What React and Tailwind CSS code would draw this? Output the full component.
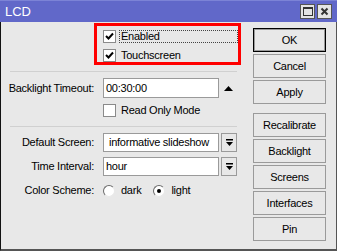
import React from "react";

const font = { fontFamily: '"Liberation Sans", Arial, sans-serif' };

function Check({ checked }) {
  return (
    <div className="w-[13px] h-[13px] shrink-0 bg-white border border-[#8a8a8a] flex items-center justify-center">
      {checked && (
        <svg width="9" height="9" viewBox="0 0 9 9">
          <path d="M1 4 L3.5 6.5 L8 1.5" stroke="#000" strokeWidth="2" fill="none" />
        </svg>
      )}
    </div>
  );
}

function Radio({ checked }) {
  return (
    <div className="w-[12px] h-[12px] shrink-0 rounded-full bg-white border border-t-[#6a6a6a] border-l-[#6a6a6a] border-r-[#e8e8e8] border-b-[#e8e8e8] flex items-center justify-center">
      {checked && <div className="w-[4px] h-[4px] rounded-full bg-black" />}
    </div>
  );
}

function DropBtn() {
  return (
    <div className="w-[16px] h-full ml-[2px] bg-[#e8e8e8] border border-[#9a9a9a] flex items-center justify-center">
      <svg width="9" height="9" viewBox="0 0 9 9">
        <rect x="1" y="1" width="7" height="1.5" fill="#000" />
        <path d="M1 4 H8 L4.5 8 Z" fill="#000" />
      </svg>
    </div>
  );
}

function Btn({ children, def }) {
  return (
    <div
      className={
        "w-[73px] h-[24px] flex items-center justify-center text-[11px] text-black bg-[#e8e8e8] " +
        (def ? "border border-black shadow-[inset_0_0_0_1px_#9a9a9a]" : "border border-[#9a9a9a]")
      }
    >
      {children}
    </div>
  );
}

function Label({ children }) {
  return <div className="w-[95px] shrink-0 text-right pr-[2px]">{children}</div>;
}

export default function App() {
  return (
    <div className="w-[337px] h-[251px] bg-[#e8e8e8] flex flex-col text-[11px] tracking-[-0.25px] text-black overflow-hidden" style={font}>
      <div className="h-[22px] shrink-0 bg-[#6168c9] border-t border-[#7c83d6] flex items-center pl-[5px] pr-[5px]">
        <span className="text-white text-[13px] leading-none tracking-normal">LCD</span>
        <div className="ml-auto flex gap-[2px]">
          <div className="w-[15px] h-[15px] bg-[#e4e4e4] border border-[#555] flex items-center justify-center">
            <div className="w-[10px] h-[9px] border border-[#333] border-t-2" />
          </div>
          <div className="w-[15px] h-[15px] bg-[#e4e4e4] border border-[#555] flex items-center justify-center">
            <svg width="9" height="9" viewBox="0 0 9 9">
              <path d="M1.5 1.5 L7.5 7.5 M7.5 1.5 L1.5 7.5" stroke="#333" strokeWidth="2" />
            </svg>
          </div>
        </div>
      </div>
      <div className="flex-1 flex border-l border-l-[#111] border-r border-r-[#555] border-b-2 border-b-[#555]">
        <div className="w-[244px] shrink-0 flex flex-col">
          <div className="ml-[93px] mt-[1px] w-[147px] h-[42px] border-[3px] border-[#ff0000] flex flex-col gap-[6px] pt-[4px] pl-[6px]">
            <div className="h-[13px] flex items-center">
              <Check checked />
              <div className="ml-[3px] flex-1 h-[13px] border border-dotted border-[#444] flex items-center pl-[1px] leading-none">Enabled</div>
            </div>
            <div className="h-[13px] flex items-center">
              <Check checked />
              <div className="ml-[4px] pl-[1px] leading-none">Touchscreen</div>
            </div>
          </div>
          <div className="mt-[6px] ml-[9px] w-[227px] h-[1px] bg-[#d0d0d0]" />
          <div className="mt-[6px] h-[20px] flex items-center">
            <Label>Backlight Timeout:</Label>
            <div className="ml-[7px] w-[116px] h-full bg-white border border-[#9a9a9a] flex items-center pl-[2px]">00:30:00</div>
            <svg className="ml-[5px]" width="9" height="5" viewBox="0 0 9 5">
              <path d="M0 5 L4.5 0 L9 5 Z" fill="#000" />
            </svg>
          </div>
          <div className="mt-[6px] h-[13px] flex items-center ml-[102px]">
            <Check />
            <div className="ml-[4px] pl-[1px]">Read Only Mode</div>
          </div>
          <div className="mt-[9px] ml-[9px] w-[227px] h-[1px] bg-[#d0d0d0]" />
          <div className="mt-[6px] h-[19px] flex items-center">
            <Label>Default Screen:</Label>
            <div className="ml-[7px] w-[116px] h-full bg-white border border-[#9a9a9a] flex items-center pl-[5px] whitespace-nowrap overflow-hidden">informative slideshow</div>
            <DropBtn />
          </div>
          <div className="mt-[5px] h-[19px] flex items-center">
            <Label>Time Interval:</Label>
            <div className="ml-[7px] w-[116px] h-full bg-white border border-[#9a9a9a] flex items-center pl-[2px]">hour</div>
            <DropBtn />
          </div>
          <div className="mt-[8px] h-[13px] flex items-center">
            <Label>Color Scheme:</Label>
            <div className="ml-[7px] flex items-center">
              <Radio />
              <span className="ml-[6px]">dark</span>
              <div className="ml-[12px]"><Radio checked /></div>
              <span className="ml-[6px]">light</span>
            </div>
          </div>
        </div>
        <div className="ml-[8px] pt-[6px] flex flex-col">
          <div className="flex flex-col gap-[2px]">
            <Btn def>OK</Btn>
            <Btn>Cancel</Btn>
            <Btn>Apply</Btn>
          </div>
          <div className="mt-[9px] flex flex-col gap-[2px]">
            <Btn>Recalibrate</Btn>
            <Btn>Backlight</Btn>
            <Btn>Screens</Btn>
            <Btn>Interfaces</Btn>
            <Btn>Pin</Btn>
          </div>
        </div>
      </div>
    </div>
  );
}
